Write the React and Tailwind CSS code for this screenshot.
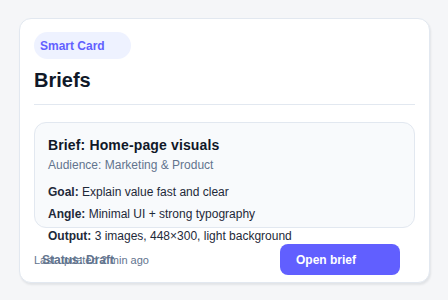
export default function App() {
  return (
    <div className="min-h-[300px] w-[448px] bg-[#f5f6f8] py-[18px] pr-[18px] pl-[19px] font-['Liberation_Sans',Arial,sans-serif]">
      {/* Carte */}
      <div className="h-[265px] rounded-xl border border-slate-200 bg-white px-[14px] pt-[13px] pb-[7px] shadow-[1px_2px_2px_rgba(15,23,42,0.08)]">
        <div className="flex h-[27px] w-[97px] items-center rounded-full bg-indigo-50 px-1.5 text-xs leading-4 font-bold text-indigo-500">
          Smart Card
        </div>
        <h1 className="mt-[7px] text-xl leading-7 font-bold text-gray-900">Briefs</h1>
        <div className="mt-[10px] h-px bg-slate-200" />

        {/* Brief */}
        <div className="mt-[17px] h-[106px] rounded-xl border border-slate-200 bg-slate-50 px-[13px] pt-3">
          <div className="text-sm leading-5 font-bold tracking-[0.01em] text-gray-900">Brief: Home-page visuals</div>
          <div className="mt-0.5 text-xs leading-4 text-slate-500">Audience: Marketing &amp; Product</div>
          <p className="mt-[11px] text-xs leading-4 text-gray-800">
            <span className="font-bold">Goal:</span> Explain value fast and clear
          </p>
          <p className="mt-1.5 text-xs leading-4 text-gray-800">
            <span className="font-bold">Angle:</span> Minimal UI + strong typography
          </p>
          <p className="mt-1.5 text-xs leading-4 text-gray-800">
            <span className="font-bold">Output:</span> 3 images, 448×300, light background
          </p>
        </div>

        {/* Pied */}
        <div className="mt-4 flex items-center justify-between">
          <div className="grid leading-4">
            <span className="col-start-1 row-start-1 text-[11px] text-slate-500">Last updated 2 min ago</span>
            <span className="col-start-1 row-start-1 pl-2 text-xs font-semibold text-slate-500">Status: Draft</span>
          </div>
          <button className="mr-[15px] flex h-[31px] w-[120px] items-center rounded-lg bg-indigo-500 pl-4 text-xs font-semibold text-white">
            Open brief
          </button>
        </div>
      </div>
    </div>
  )
}
